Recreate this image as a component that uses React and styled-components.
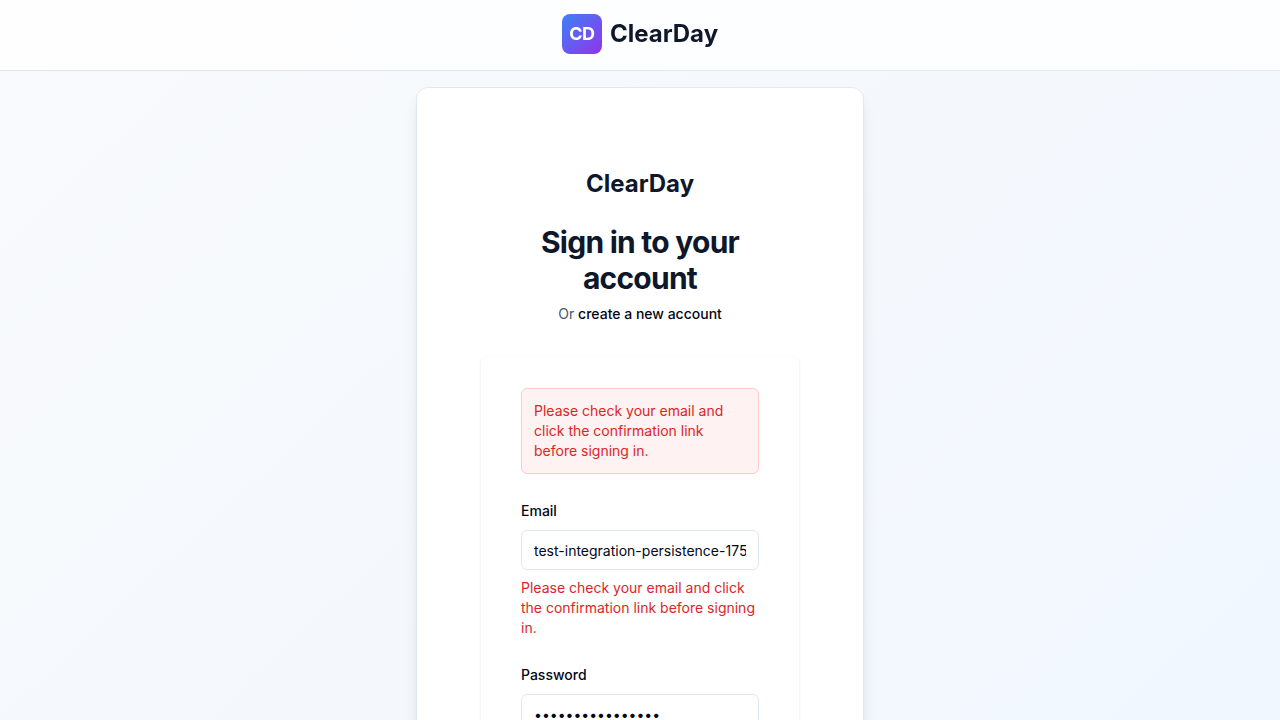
import React from "react";
import styled, { createGlobalStyle } from "styled-components";

const GlobalStyle = createGlobalStyle`
  *, *::before, *::after { box-sizing: border-box; }
  body {
    margin: 0;
    font-family: Inter, "Liberation Sans", sans-serif;
    font-size: 14px;
    line-height: 20px;
    color: #020817;
  }
  h1, h2, p { margin: 0; }
`;

const Page = styled.div`
  min-height: 100vh;
  background: linear-gradient(to bottom right, #f8fafc, #eff6ff);
`;

const Header = styled.header`
  display: flex;
  justify-content: center;
  padding: 14px 16px 16px;
  background: rgba(255, 255, 255, 0.8);
  backdrop-filter: blur(12px);
  border-bottom: 1px solid #e2e8f0;
`;

const Brand = styled.a`
  display: flex;
  align-items: center;
  gap: 8px;
  color: #0f172a;
  text-decoration: none;
`;

const Logo = styled.span`
  display: flex;
  align-items: center;
  justify-content: center;
  width: 40px;
  height: 40px;
  border-radius: 8px;
  background: linear-gradient(to bottom right, #3b82f6, #9333ea);
  color: #ffffff;
  font-size: 18px;
  line-height: 28px;
  font-weight: 700;
  letter-spacing: -0.025em;
`;

const BrandName = styled.span`
  font-size: 24px;
  line-height: 32px;
  font-weight: 700;
`;

const Main = styled.main`
  padding: 16px 16px 360px;
`;

const Card = styled.section`
  width: 100%;
  max-width: 448px;
  margin: 0 auto;
  padding: 80px 64px;
  background: #ffffff;
  border: 1px solid #e2e8f0;
  border-radius: 12px;
  box-shadow: 0 10px 15px -3px rgba(0, 0, 0, 0.1), 0 4px 6px -4px rgba(0, 0, 0, 0.1);
`;

const Intro = styled.div`
  text-align: center;
  padding: 0 32px;
`;

const Product = styled.h1`
  font-size: 24px;
  line-height: 32px;
  font-weight: 700;
  color: #0f172a;
`;

const Title = styled.h2`
  margin-top: 24px;
  font-size: 30px;
  line-height: 36px;
  font-weight: 700;
  letter-spacing: -0.025em;
  color: #0f172a;
`;

const Subtitle = styled.p`
  margin-top: 8px;
  color: #475569;
`;

const TextLink = styled.a`
  color: #020817;
  font-weight: 500;
  text-decoration: none;
`;

const Form = styled.form`
  display: flex;
  flex-direction: column;
  gap: 24px;
  margin-top: 32px;
  padding: 32px 40px;
  background: #ffffff;
  border-radius: 8px;
  box-shadow: 0 1px 3px rgba(0, 0, 0, 0.1), 0 1px 2px -1px rgba(0, 0, 0, 0.1);
`;

const Alert = styled.div`
  padding: 12px;
  border: 1px solid #fecaca;
  border-radius: 6px;
  background: #fef2f2;
  color: #dc2626;
`;

const Field = styled.div`
  display: flex;
  flex-direction: column;
  gap: 8px;
`;

const LabelRow = styled.div`
  font-size: 16px;
  line-height: 24px;
`;

const Label = styled.label`
  font-size: 14px;
  line-height: 14px;
  font-weight: 500;
`;

const Input = styled.input`
  width: 100%;
  height: 40px;
  padding: 8px 12px;
  border: 1px solid #e2e8f0;
  border-radius: 6px;
  background: #ffffff;
  color: #020817;
  font: inherit;
`;

const FieldError = styled.p`
  color: #dc2626;
`;

const message = "Please check your email and click the confirmation link before signing in.";

export default function App() {
  return (
    <Page>
      <GlobalStyle />
      <Header>
        <Brand href="#">
          <Logo>CD</Logo>
          <BrandName>ClearDay</BrandName>
        </Brand>
      </Header>
      <Main>
        <Card>
          <Intro>
            <Product>ClearDay</Product>
            <Title>Sign in to your account</Title>
            <Subtitle>
              Or <TextLink href="#">create a new account</TextLink>
            </Subtitle>
          </Intro>
          <Form>
            <Alert role="alert">{message}</Alert>
            <Field>
              <LabelRow>
                <Label htmlFor="email">Email</Label>
              </LabelRow>
              <Input id="email" type="email" defaultValue="test-integration-persistence-175@example.com" />
              <FieldError>{message}</FieldError>
            </Field>
            <Field>
              <LabelRow>
                <Label htmlFor="password">Password</Label>
              </LabelRow>
              <Input id="password" type="password" defaultValue="password12345678" />
            </Field>
          </Form>
        </Card>
      </Main>
    </Page>
  );
}
